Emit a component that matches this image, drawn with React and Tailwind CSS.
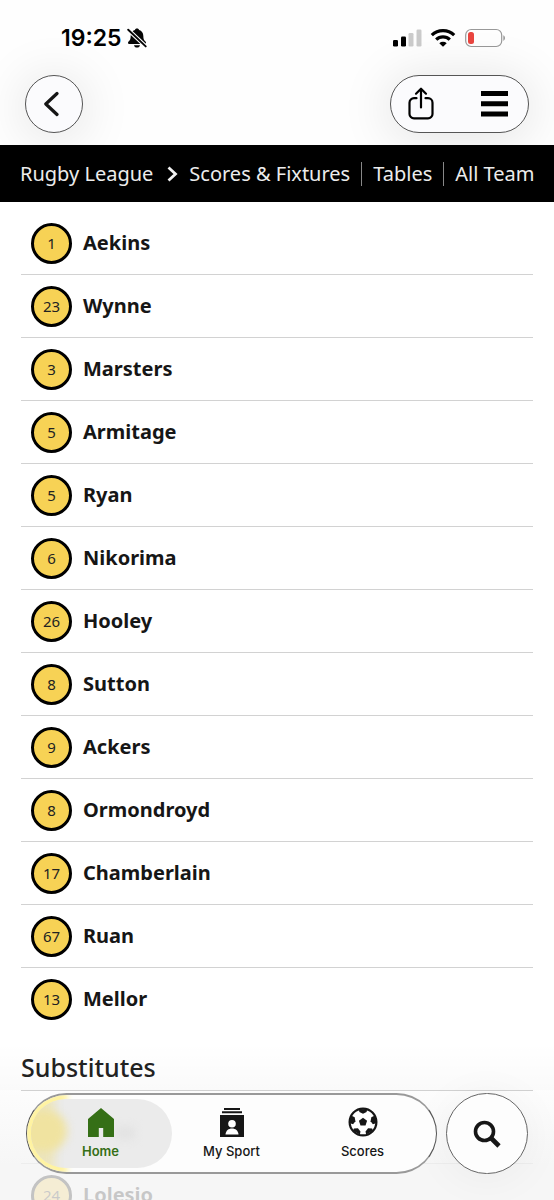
import clsx from 'clsx'

const STARTERS = [
  { number: 1, name: 'Aekins' },
  { number: 23, name: 'Wynne' },
  { number: 3, name: 'Marsters' },
  { number: 5, name: 'Armitage' },
  { number: 5, name: 'Ryan' },
  { number: 6, name: 'Nikorima' },
  { number: 26, name: 'Hooley' },
  { number: 8, name: 'Sutton' },
  { number: 9, name: 'Ackers' },
  { number: 8, name: 'Ormondroyd' },
  { number: 17, name: 'Chamberlain' },
  { number: 67, name: 'Ruan' },
  { number: 13, name: 'Mellor' },
]

// The first substitute sits behind the tab bar
const SUBSTITUTES = [
  { number: '', name: '' },
  { number: 24, name: 'Lolesio' },
]

function BellOffIcon() {
  return (
    <svg width="20" height="20" viewBox="0 0 20 20" fill="#050505" aria-label="Silent">
      <path d="M10 .4c1.200 0 2 .7 2.100 1.600 2.700.8 4.200 3 4.200 5.800 0 3.500.8 4.400 1.900 5.500.6.6.8 1 .8 1.500 0 .8-.6 1.300-1.500 1.300H2.500C1.600 16.100 1 15.600 1 14.800c0-.5.2-.9.8-1.500 1.100-1.100 1.900-2 1.900-5.500 0-2.800 1.500-5 4.200-5.800C8 1.100 8.800.4 10 .4Z" />
      <path d="M7 17.200h6c-.3 1.400-1.400 2.300-3 2.300s-2.700-.9-3-2.300Z" />
      <path d="M.6 1.200 19 18.600" stroke="#fff" strokeWidth="4" />
      <path d="M1.200 1.700 18.700 18.400" stroke="#050505" strokeWidth="1.900" strokeLinecap="round" />
    </svg>
  )
}

function StatusIcons() {
  return (
    <div className="flex items-center gap-2">
      <svg width="30" height="20" viewBox="0 0 30 20" aria-label="Signal">
        <rect x="1" y="12" width="5" height="6.500" rx="1.300" fill="#000" />
        <rect x="9" y="8.500" width="5" height="10" rx="1.300" fill="#000" />
        <rect x="16.500" y="5" width="5" height="13.500" rx="1.300" fill="#cbcbcb" />
        <rect x="24.500" y="1.500" width="5" height="17" rx="1.300" fill="#cbcbcb" />
      </svg>
      <svg width="26" height="20" viewBox="0 0 26 20" fill="none" stroke="#000" strokeWidth="3.200" aria-label="Wi-Fi">
        <path d="M1.800 7.200a16 16 0 0 1 22.400 0" />
        <path d="M6.200 11.700a9.700 9.700 0 0 1 13.600 0" />
        <path d="M13 18.800 9.300 15.200a5.400 5.400 0 0 1 7.400 0Z" fill="#000" stroke="none" />
      </svg>
      <svg width="42" height="20" viewBox="0 0 42 20" aria-label="Battery">
        <rect x="1.700" y="1.500" width="36" height="17" rx="5.500" fill="none" stroke="#999" strokeWidth="1.200" />
        <rect x="4" y="4" width="6" height="12" rx="2.500" fill="#ea4640" />
        <path d="M39.300 7.300v5.600c1-.5 1.700-1.500 1.700-2.800s-.7-2.300-1.700-2.800Z" fill="#999" />
      </svg>
    </div>
  )
}

function Header() {
  return (
    <header className="bg-[#fefefe] relative overflow-hidden pb-3">
      <div className="flex items-center justify-between pl-[61px] pr-12 pt-7">
        <div className="flex items-center gap-[5px]">
          <span className="font-[Inter,sans-serif] text-[23px] leading-5 font-semibold text-black">19:25</span>
          <BellOffIcon />
        </div>
        <StatusIcons />
      </div>
      <div className="flex justify-between px-[25px] pt-[27px]">
        <button
          aria-label="Back"
          className="w-[58px] h-[58px] rounded-full border border-[#555] bg-[#fbfbfd] flex items-center justify-center shadow-[0_4px_50px_4px_rgba(0,0,0,0.1)]"
        >
          <svg width="20" height="28" viewBox="0 0 20 28" fill="none" stroke="#151515" strokeWidth="3.200" strokeLinecap="round" strokeLinejoin="round">
            <path d="M13 3.500 1.800 14 13 24.500" />
          </svg>
        </button>
        <div className="w-[139px] h-[58px] rounded-full border border-[#555] bg-[#fbfbfd] flex items-center justify-between px-4 shadow-[0_4px_50px_4px_rgba(0,0,0,0.1)]">
          <button aria-label="Share">
            <svg width="28" height="34" viewBox="0 0 28 34" fill="none" stroke="#000" strokeWidth="2.200" strokeLinecap="round" strokeLinejoin="round">
              <path d="M9.500 11.200H7a4.500 4.500 0 0 0-4.500 4.500v11.200A4.500 4.500 0 0 0 7 31.400h14a4.500 4.500 0 0 0 4.500-4.500V15.700a4.500 4.500 0 0 0-4.500-4.500h-2.500" />
              <path d="M14 20.500V2M9 6.700l5-5 5 5" />
            </svg>
          </button>
          <button aria-label="Menu" className="pr-1">
            <svg width="27" height="26" viewBox="0 0 27 26" fill="#000">
              <path d="M0 0h27v5H0zM0 10.200h27v5H0zM0 20.400h27v5H0z" />
            </svg>
          </button>
        </div>
      </div>
    </header>
  )
}

function SectionNav() {
  return (
    <nav className="bg-black h-[57px] px-5">
      <div className="flex items-center h-full overflow-hidden whitespace-nowrap text-xl text-[#ececec]">
        <a href="#rugby-league">Rugby League</a>
        <svg className="ml-[14px] mr-[11px] shrink-0" width="11" height="16" viewBox="0 0 11 16" fill="none" stroke="#f2f2f2" strokeWidth="2.800">
          <path d="m1.500 1.500 7 6.500-7 6.500" />
        </svg>
        <a href="#scores">Scores &amp; Fixtures</a>
        <span className="mx-[11px] w-px h-6 bg-[#888] shrink-0" />
        <a href="#tables">Tables</a>
        <span className="mx-[11px] w-px h-6 bg-[#888] shrink-0" />
        <a href="#teams">All Teams</a>
      </div>
    </nav>
  )
}

function PlayerList({ players }) {
  return (
    <ul>
      {players.map((player, i) => (
        <li
          key={i}
          className={clsx(
            'flex items-center gap-[11px] h-[63px] pl-[10px] border-b',
            i < players.length - 1 ? 'border-[#d2d2d2]' : 'border-transparent',
          )}
        >
          <span className="w-[41px] h-[41px] shrink-0 rounded-full border-[3px] border-black bg-[#f7d255] flex items-center justify-center text-[15px] text-[#222]">
            {player.number}
          </span>
          <span className="text-xl font-bold text-[#161616]">{player.name}</span>
        </li>
      ))}
    </ul>
  )
}

function HomeIcon() {
  return (
    <svg width="26" height="29" viewBox="0 0 26 29" fill="#356f16">
      <path d="M13 0 26 11v18H15.200v-9h-4.400v9H0V11Z" />
    </svg>
  )
}

function MySportIcon() {
  return (
    <svg width="26" height="29" viewBox="0 0 26 29" fill="#161616">
      <path d="M5 0h16v2H5zM3 3.200h20v2H3zM1 7h24v22H1z" />
      <circle cx="13" cy="15.700" r="3.800" fill="#fff" />
      <path d="M6.500 26.500c.4-4 3-6 6.500-6s6.100 2 6.500 6Z" fill="#fff" />
    </svg>
  )
}

function BallIcon() {
  return (
    <svg width="30" height="30" viewBox="0 0 30 30" fill="#161616">
      <circle cx="15" cy="15" r="13.400" fill="#fff" stroke="#161616" strokeWidth="2.200" />
      <path d="m15 10.800 4.100 3-1.600 4.800h-5l-1.600-4.800Z" />
      <path d="M10.800 2.200h8.400l-.6 2.800-3.600 1.800-3.600-1.800Z" />
      <path d="m26.900 8.600 2 7.400-4 1.200-2.300-3 .7-4Z" />
      <path d="m3.100 8.600-2 7.400 4 1.200 2.300-3-.7-4Z" />
      <path d="m25 23.600-6.800 4.200-.7-3.300 2.600-3.300 4 .4Z" />
      <path d="m5 23.600 6.800 4.200.7-3.300-2.600-3.300-4 .4Z" />
    </svg>
  )
}

function Tab({ icon, label, active }) {
  return (
    <button
      className={clsx(
        'relative flex-1 h-[69px] rounded-full flex flex-col items-center justify-end gap-1 pb-[7px] text-[13px] leading-5 font-[Inter,sans-serif]',
        active ? 'text-[#356f16] font-semibold' : 'text-[#161616] font-medium',
      )}
    >
      {icon}
      {label}
    </button>
  )
}

function TabBar() {
  return (
    <div className="absolute inset-x-0 bottom-0 pt-24 pb-[26px] px-[26px]">
      {/* Haze over the content that scrolls under the bar */}
      <div className="absolute inset-x-0 bottom-0 h-9 bg-[#f4f4f4]/80" />
      <div className="absolute inset-x-0 bottom-9 h-[74px] bg-gradient-to-t from-[#f4f4f4]/80 to-[#f4f4f4]/20" />
      <div className="absolute inset-x-0 bottom-[110px] h-12 bg-gradient-to-t from-black/2 to-transparent" />
      <div className="relative flex gap-[9px]">
        <nav className="relative flex-1 h-[81px] rounded-full border-x border-y-2 border-x-[#555] border-y-[#999] bg-[#fdfdfd] overflow-hidden flex items-center px-2">
          <div className="absolute -left-1 -top-1 w-11 h-[85px] rounded-l-full bg-[#fff3a0] blur-[3px]" />
          <div className="absolute left-1 top-1 w-[141px] h-[69px] rounded-full bg-[#ebebeb] overflow-hidden">
            <div className="absolute -left-3 -top-3 w-9 h-[93px] bg-[#ece5bd] blur-[5px]" />
            <div className="absolute -left-3 top-3 w-12 h-10 rounded-full bg-[#f0e3a0] blur-[4px]" />
            <div className="absolute left-[84px] top-7 w-5 h-3 bg-[#e2e2e2] blur-[4px]" />
          </div>
          <Tab icon={<HomeIcon />} label="Home" active />
          <Tab icon={<MySportIcon />} label="My Sport" />
          <Tab icon={<BallIcon />} label="Scores" />
        </nav>
        <button
          aria-label="Search"
          className="w-[82px] h-[81px] rounded-full border border-[#666] bg-[#fdfdfd] flex items-center justify-center shadow-[0_4px_40px_4px_rgba(0,0,0,0.04)]"
        >
          <svg width="28" height="28" viewBox="0 0 28 28" fill="none" stroke="#161616">
            <circle cx="11.500" cy="11.500" r="9" strokeWidth="3.600" />
            <path d="m17.500 17.500 8.500 8.500" strokeWidth="4.600" />
          </svg>
        </button>
      </div>
    </div>
  )
}

export default function App() {
  return (
    <div className="relative h-screen overflow-hidden flex flex-col bg-white font-['Noto_Sans',sans-serif]">
      <Header />
      <SectionNav />
      <main className="flex-1 min-h-0 overflow-hidden px-[21px] pt-[10px]">
        <PlayerList players={STARTERS} />
        <h2 className="mt-[18px] pb-[5px] text-[25px] leading-9 font-medium text-[#222] border-b border-[#c8c8c8] mb-[10px]">
          Substitutes
        </h2>
        <PlayerList players={SUBSTITUTES} />
      </main>
      <TabBar />
    </div>
  )
}
